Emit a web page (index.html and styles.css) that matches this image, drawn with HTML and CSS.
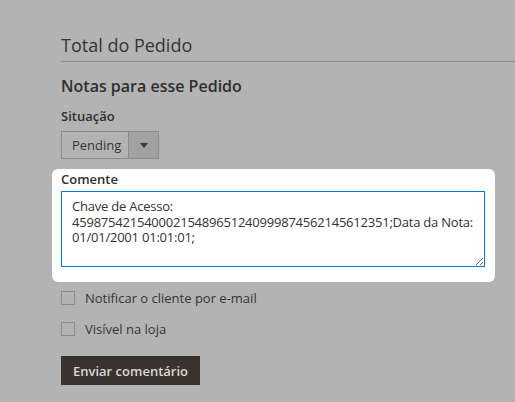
FILE: index.html
```html
<!DOCTYPE html>
<html lang="pt">
<head>
<meta charset="utf-8">
<link rel="stylesheet" href="styles.css">
</head>
<body>
<div class="page">
  <h2 class="section-title">Total do Pedido</h2>
  <h3 class="sub-title">Notas para esse Pedido</h3>
  <div class="field">
    <div class="label">Situação</div>
    <div class="select">
      <span class="select-value">Pending</span>
      <span class="select-arrow"><svg width="8" height="5" viewBox="0 0 8 5"><path d="M0 0h8L4 5z" fill="#3a3a3a"/></svg></span>
    </div>
  </div>
  <div class="highlight">
    <div class="label">Comente</div>
    <textarea class="comment">Chave de Acesso: 45987542154000215489651240999874562145612351;Data da Nota: 01/01/2001 01:01:01;</textarea>
  </div>
  <label class="check"><span class="box"></span><span>Notificar o cliente por e-mail</span></label>
  <label class="check"><span class="box"></span><span>Visível na loja</span></label>
  <button class="submit">Enviar comentário</button>
</div>
</body>
</html>
```
FILE: styles.css
```css
* { box-sizing: border-box; }
html, body { margin: 0; padding: 0; }
body {
  background: #b3b3b3;
  font-family: "Open Sans", "Liberation Sans", sans-serif;
  color: #303030;
  width: 515px;
  height: 402px;
  overflow: hidden;
}
.page {
  padding: 33px 0 0 61px;
}
.section-title {
  margin: 0;
  font-size: 18px;
  font-weight: 400;
  line-height: 24px;
  color: #333;
  padding-bottom: 4px;
  border-bottom: 1px solid #8c8c8c;
}
.sub-title {
  margin: 13px 0 0;
  font-size: 16px;
  font-weight: 600;
  line-height: 22px;
  color: #2e2e2e;
}
.label {
  font-size: 13px;
  font-weight: 600;
  line-height: 18px;
  color: #2e2e2e;
}
.field { margin-top: 10px; }
.field .label { margin-bottom: 6px; }
.select {
  display: flex;
  width: 98px;
  height: 28px;
  border: 1px solid #8a8a8a;
}
.select-value {
  flex: 1;
  display: flex;
  align-items: center;
  padding-left: 10px;
  font-size: 13px;
  color: #333;
}
.select-arrow {
  width: 30px;
  border-left: 1px solid #8a8a8a;
  background: #a2a2a2;
  display: flex;
  align-items: center;
  justify-content: center;
}
.highlight {
  margin: 10px 0 0 -9px;
  width: 443px;
  background: #fff;
  border-radius: 6px;
  padding: 1px 10px 15px 9px;
}
.highlight .label { margin-bottom: 3px; }
.comment {
  display: block;
  width: 424px;
  height: 76px;
  border: 1px solid #007bdb;
  border-radius: 0;
  padding: 7px 9px 6px 10px;
  font-family: "Open Sans", "Liberation Sans", sans-serif;
  font-size: 13px;
  letter-spacing: -0.22px;
  line-height: 15.5px;
  color: #333;
  outline: none;
  resize: vertical;
}
.check {
  display: flex;
  align-items: center;
  gap: 10px;
  font-size: 13px;
  color: #333;
  height: 18px;
}
.check:first-of-type { margin-top: 7px; }
.check + .check { margin-top: 13px; }
.box {
  width: 14px;
  height: 14px;
  border: 1px solid #8a8a8a;
}
.submit {
  display: block;
  margin-top: 18px;
  height: 29px;
  padding: 0 12px;
  background: #3a322d;
  color: #d9d9d9;
  border: none;
  font-family: "Open Sans", "Liberation Sans", sans-serif;
  font-size: 13px;
  font-weight: 600;
}
```
